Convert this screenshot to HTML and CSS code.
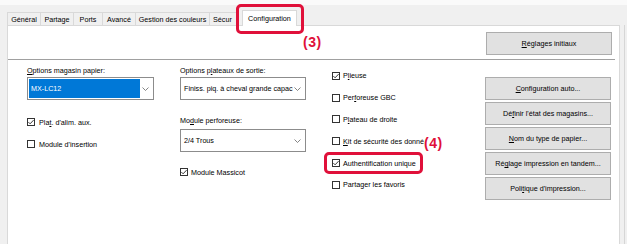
FILE: index.html
```html
<!DOCTYPE html>
<html lang="fr">
<head>
    <meta charset="UTF-8">
    <title>Propriétés de l'imprimante - Configuration</title>
    <link rel="stylesheet" href="styles.css">
</head>
<body>
    <div class="window">
        <div class="topstrip"></div>
        <div class="tabbar">
            <div class="tab tab-general">Général</div>
            <div class="tab tab-share">Partage</div>
            <div class="tab tab-ports">Ports</div>
            <div class="tab tab-adv">Avancé</div>
            <div class="tab tab-color">Gestion des couleurs</div>
            <div class="tab tab-sec">Sécur</div>
            <div class="tab tab-active">Configuration</div>
        </div>

        <div class="panel">
            <div class="panel-top">
                <button class="btn"><span><u>R</u>églages initiaux</span></button>
            </div>

            <div class="panel-body">
                <div class="col col-trays">
                    <div class="field-label"><u>O</u>ptions magasin papier:</div>
                    <div class="select">
                        <span class="select-value selected">MX-LC12</span>
                        <svg class="chevron" width="7" height="4" viewBox="0 0 7 4"><polyline points="0.5,0.5 3.5,3.5 6.5,0.5" /></svg>
                    </div>
                    <label class="check check-bypass">
                        <span class="box on"><svg viewBox="0 0 8 8"><path d="M1.4 4.1 L3.1 5.8 L6.6 2.1" /></svg></span>
                        <span>Pla<u>t</u>. d'alim. aux.</span>
                    </label>
                    <label class="check check-insert">
                        <span class="box"></span>
                        <span>Module d'insertion</span>
                    </label>
                </div>

                <div class="col col-output">
                    <div class="field-label">Options p<u>l</u>ateaux de sortie:</div>
                    <div class="select">
                        <span class="select-value">Finiss. piq. à cheval grande capac</span>
                        <svg class="chevron" width="7" height="4" viewBox="0 0 7 4"><polyline points="0.5,0.5 3.5,3.5 6.5,0.5" /></svg>
                    </div>
                    <div class="field-label label-punch">Mo<u>d</u>ule perforeuse:</div>
                    <div class="select select-punch">
                        <span class="select-value">2/4 Trous</span>
                        <svg class="chevron" width="7" height="4" viewBox="0 0 7 4"><polyline points="0.5,0.5 3.5,3.5 6.5,0.5" /></svg>
                    </div>
                    <label class="check check-trim">
                        <span class="box on"><svg viewBox="0 0 8 8"><path d="M1.4 4.1 L3.1 5.8 L6.6 2.1" /></svg></span>
                        <span>Module Massicot</span>
                    </label>
                </div>

                <div class="col col-options">
                    <label class="check row">
                        <span class="box on"><svg viewBox="0 0 8 8"><path d="M1.4 4.1 L3.1 5.8 L6.6 2.1" /></svg></span>
                        <span>P<u>l</u>ieuse</span>
                    </label>
                    <label class="check row">
                        <span class="box"></span>
                        <span>Per<u>f</u>oreuse GBC</span>
                    </label>
                    <label class="check row">
                        <span class="box"></span>
                        <span>P<u>l</u>ateau de droite</span>
                    </label>
                    <label class="check row">
                        <span class="box"></span>
                        <span><u>K</u>it de sécurité des donné</span>
                    </label>
                    <label class="check row">
                        <span class="box on"><svg viewBox="0 0 8 8"><path d="M1.4 4.1 L3.1 5.8 L6.6 2.1" /></svg></span>
                        <span>Authentification unique</span>
                    </label>
                    <label class="check row">
                        <span class="box"></span>
                        <span>Partager les favoris</span>
                    </label>
                </div>

                <div class="col col-buttons">
                    <button class="btn"><span><u>C</u>onfiguration auto...</span></button>
                    <button class="btn"><span>Dé<u>f</u>inir l'état des magasins...</span></button>
                    <button class="btn"><span><u>N</u>om du type de papier...</span></button>
                    <button class="btn"><span>Ré<u>g</u>lage impression en tandem...</span></button>
                    <button class="btn"><span>Poli<u>t</u>ique d'impression...</span></button>
                </div>
            </div>
        </div>

        <div class="mark mark-3"></div>
        <div class="callout callout-3">(3)</div>
        <div class="mark mark-4"></div>
        <div class="callout callout-4">(4)</div>
    </div>
</body>
</html>
```

FILE: styles.css
```css
* {
    margin: 0;
    padding: 0;
    box-sizing: border-box;
}

body {
    background: #f0f0f0;
    font-family: 'Liberation Sans', Arial, sans-serif;
    font-size: 7.2px;
    color: #000;
}

u {
    text-decoration-thickness: 1px;
    text-underline-offset: 1px;
}

.window {
    position: relative;
    width: 627px;
    height: 244px;
    display: flex;
    flex-direction: column;
    padding: 0 7px;
    overflow: hidden;
}

.window::after {
    content: "";
    position: absolute;
    top: 25px;
    bottom: 0;
    right: 2px;
    width: 1px;
    background: #d6d6d6;
}

.topstrip {
    flex: none;
    height: 5px;
    margin: 0 -7px;
    background: #fafafa;
}

/* tabs */

.tabbar {
    flex: none;
    height: 20px;
    display: flex;
    align-items: flex-end;
}

.tab {
    height: 13px;
    border: 1px solid #d9d9d9;
    border-bottom: none;
    margin-left: -1px;
    display: flex;
    align-items: center;
    justify-content: center;
    white-space: nowrap;
    overflow: hidden;
    background: #f0f0f0;
}

.tab-general { width: 34px; margin-left: 0; }
.tab-share { width: 34px; }
.tab-ports { width: 30px; }
.tab-adv { width: 34px; }
.tab-color { width: 75px; }
.tab-sec {
    width: 30px;
    justify-content: flex-start;
    padding-left: 3px;
}

.tab-active {
    position: relative;
    z-index: 1;
    width: 55px;
    height: 16px;
    margin-left: 3px;
    margin-bottom: -1px;
    background: #fff;
    padding-bottom: 1px;
}

/* page */

.panel {
    flex: 1;
    background: #fff;
    border: 1px solid #d9d9d9;
    border-bottom: none;
    display: flex;
    flex-direction: column;
}

.panel-top {
    height: 34px;
    padding: 6px 3px 0 0;
    margin-right: 4px;
    border-bottom: 1px solid #a0a0a0;
    display: flex;
    justify-content: flex-end;
    align-items: flex-start;
}

.btn {
    width: 126px;
    height: 23px;
    background: #e1e1e1;
    border: 1px solid #adadad;
    font: inherit;
    color: #000;
    display: flex;
    align-items: center;
    justify-content: center;
    white-space: nowrap;
}

.panel-body {
    display: grid;
    grid-template-columns: 127px 126px 127px 126px;
    column-gap: 26px;
    padding-left: 19px;
}

.col {
    display: flex;
    flex-direction: column;
    align-items: flex-start;
}

.col-trays,
.col-output {
    padding-top: 6px;
}

.field-label {
    line-height: 9px;
    height: 9px;
    white-space: nowrap;
}

.select {
    width: 100%;
    height: 23px;
    margin-top: 2px;
    border: 1px solid #8c8c8c;
    padding: 1px;
    display: flex;
    align-items: center;
}

.select-value {
    flex: 1;
    min-width: 0;
    height: 100%;
    display: flex;
    align-items: center;
    padding-left: 2px;
    white-space: nowrap;
}

.select-value.selected {
    background: #0078d7;
    color: #fff;
}

.chevron {
    flex: none;
    margin: 0 3px 0 2px;
    fill: none;
    stroke: #666;
    stroke-width: 0.8;
}

.label-punch {
    margin-top: 16px;
}

.select-punch {
    margin-top: 4px;
}

/* checkboxes */

.check {
    display: flex;
    align-items: center;
    gap: 4px;
    height: 10px;
    white-space: nowrap;
}

.box {
    flex: none;
    width: 8px;
    height: 8px;
    border: 1px solid #333;
    background: #fff;
    display: flex;
}

.box svg {
    margin: -1px;
    width: 8px;
    height: 8px;
    fill: none;
    stroke: #222;
    stroke-width: 0.9;
}

.check-bypass { margin-top: 17px; }
.check-insert { margin-top: 12px; }
.check-trim { margin-top: 15px; gap: 3px; }

.col-options {
    padding-top: 5px;
}

.col-options .row {
    height: 21.8px;
    gap: 3px;
}

.col-buttons {
    padding-top: 17px;
    gap: 2px;
}

/* red annotations */

.mark {
    position: absolute;
    border: 3px solid #e0103a;
    border-radius: 5px;
    z-index: 2;
}

.mark-3 {
    left: 236px;
    top: 4px;
    width: 68px;
    height: 30px;
}

.mark-4 {
    left: 324px;
    top: 152px;
    width: 99px;
    height: 22px;
}

.callout {
    position: absolute;
    z-index: 2;
    font-size: 14px;
    font-weight: bold;
    line-height: 14px;
    letter-spacing: 0.5px;
    color: #e0103a;
    background: #fff;
}

.callout-3 {
    left: 303px;
    top: 35px;
}

.callout-4 {
    left: 424px;
    top: 136px;
}
```
